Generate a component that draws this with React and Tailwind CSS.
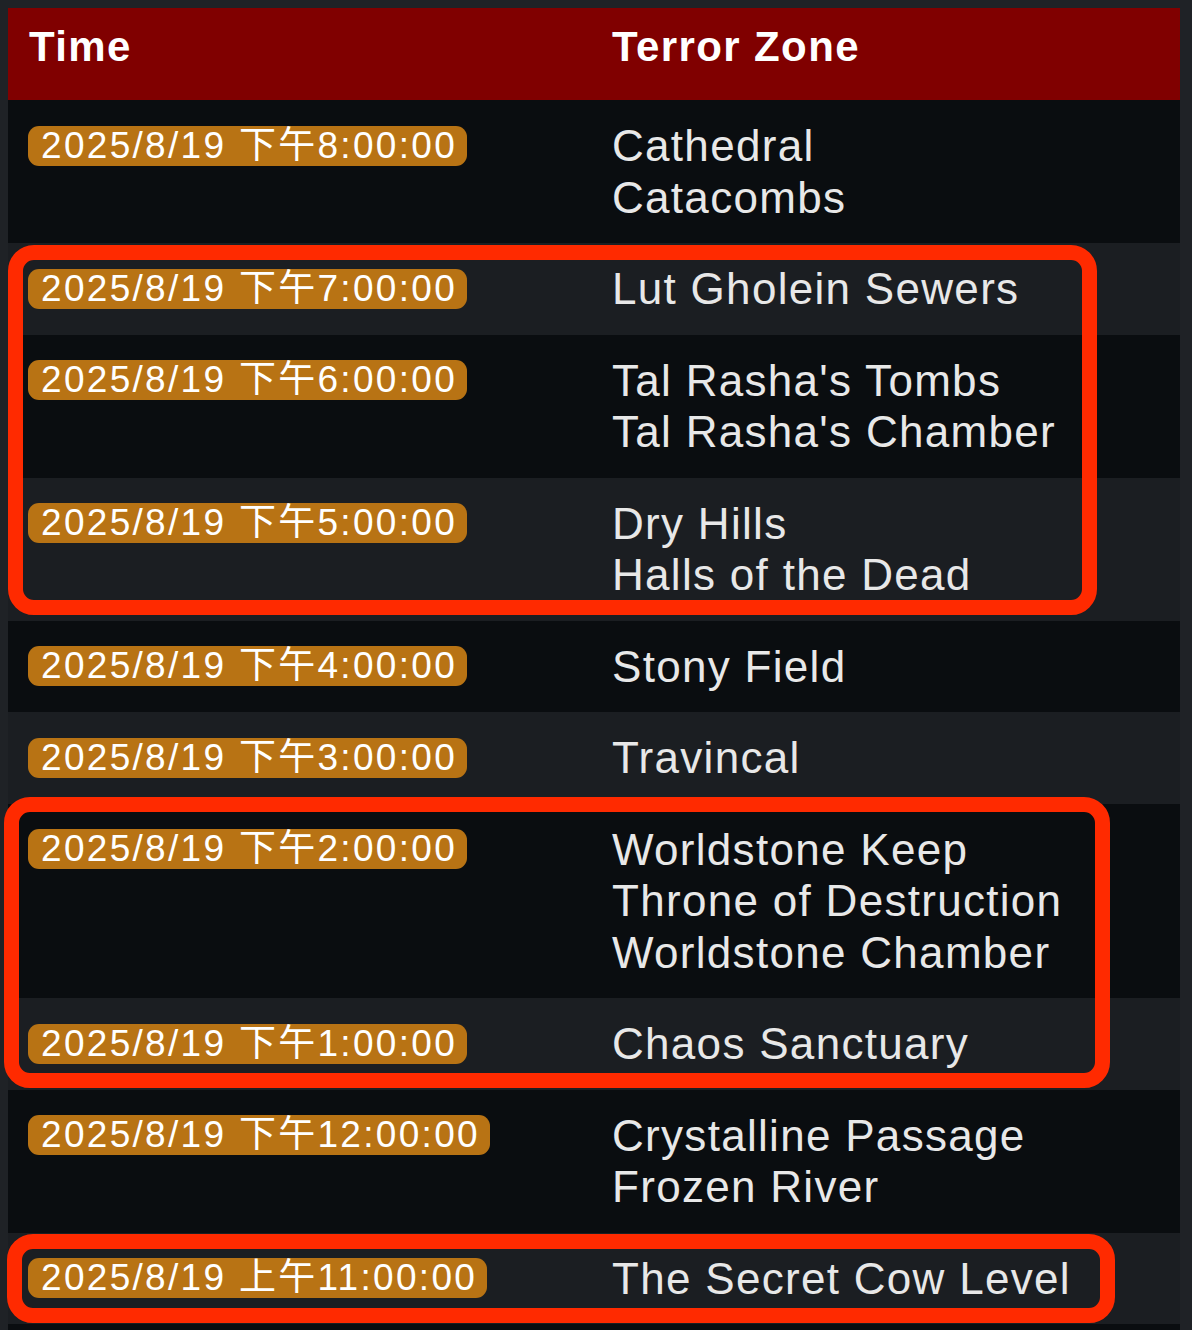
import React from 'react';

const rows = [
  { time: '2025/8/19 下午8:00:00', zones: ['Cathedral', 'Catacombs'] },
  { time: '2025/8/19 下午7:00:00', zones: ['Lut Gholein Sewers'] },
  { time: '2025/8/19 下午6:00:00', zones: ["Tal Rasha's Tombs", "Tal Rasha's Chamber"] },
  { time: '2025/8/19 下午5:00:00', zones: ['Dry Hills', 'Halls of the Dead'] },
  { time: '2025/8/19 下午4:00:00', zones: ['Stony Field'] },
  { time: '2025/8/19 下午3:00:00', zones: ['Travincal'] },
  { time: '2025/8/19 下午2:00:00', zones: ['Worldstone Keep', 'Throne of Destruction', 'Worldstone Chamber'] },
  { time: '2025/8/19 下午1:00:00', zones: ['Chaos Sanctuary'] },
  { time: '2025/8/19 下午12:00:00', zones: ['Crystalline Passage', 'Frozen River'] },
  { time: '2025/8/19 上午11:00:00', zones: ['The Secret Cow Level'] },
];

// red annotation frames drawn over the table
const marks = [
  'left-[8px] top-[245px] w-[1089px] h-[370px]',
  'left-[4px] top-[797px] w-[1106px] h-[291px]',
  'left-[7px] top-[1234px] w-[1108px] h-[89px]',
];

const Row = ({ time, zones, odd }) => (
  <div
    className={`grid grid-cols-[584px_1fr] py-[20px] ${odd ? 'bg-[#1b1e22]' : 'bg-[#0a0d10]'}`}
  >
    <div className="pl-[20px] h-[51.5px] flex items-center">
      <span className="h-[40px] leading-[40px] pl-[13px] pr-[10px] rounded-[11px] bg-[#b87314] text-white text-[37px] tracking-[2.3px] whitespace-nowrap">
        {time}
      </span>
    </div>
    <div className="pl-[20px] text-[44px] leading-[51.5px] tracking-[1.3px] text-[#e8e8e8]">
      {zones.map((z) => (
        <div key={z}>{z}</div>
      ))}
    </div>
  </div>
);

export default function App() {
  return (
    <div className="relative h-[1330px] overflow-hidden bg-[#1f2226] p-[8px] pr-[12px] font-['Liberation_Sans','Noto_Sans_CJK_SC',sans-serif]">
      <div className="w-[1172px]">
        <div className="grid grid-cols-[584px_1fr] h-[92px] pt-[16px] bg-[#800000] text-white text-[42px] leading-[46px] font-bold tracking-[1.4px]">
          <div className="pl-[21px]">Time</div>
          <div className="pl-[20px]">Terror Zone</div>
        </div>
        {rows.map((r, i) => (
          <Row key={r.time} {...r} odd={i % 2 === 1} />
        ))}
        <div className="h-[91px] bg-[#0a0d10]" />
      </div>

      {marks.map((m) => (
        <div
          key={m}
          className={`absolute ${m} border-[15px] border-[#ff2a00] rounded-[26px] pointer-events-none`}
        />
      ))}
    </div>
  );
}
